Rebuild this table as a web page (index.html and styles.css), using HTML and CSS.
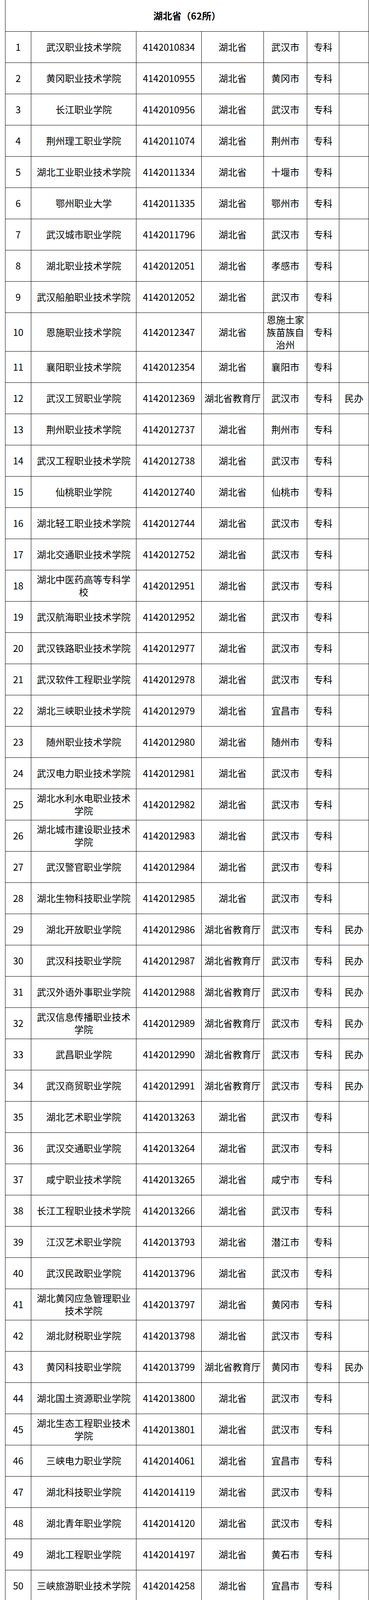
FILE: index.html
```html
<!DOCTYPE html>
<html lang="zh-CN">
<head>
<meta charset="utf-8">
<title>湖北省（62所）</title>
<link rel="stylesheet" href="styles.css">
</head>
<body>
<table class="list">
<colgroup>
<col class="c-no"><col class="c-name"><col class="c-code"><col class="c-dept"><col class="c-city"><col class="c-level"><col class="c-note">
</colgroup>
<thead>
<tr class="title-row"><th colspan="7" class="title">湖北省（62所）</th></tr>
</thead>
<tbody>
<tr><td>1</td><td>武汉职业技术学院</td><td>4142010834</td><td>湖北省</td><td>武汉市</td><td>专科</td><td></td></tr>
<tr><td>2</td><td>黄冈职业技术学院</td><td>4142010955</td><td>湖北省</td><td>黄冈市</td><td>专科</td><td></td></tr>
<tr><td>3</td><td>长江职业学院</td><td>4142010956</td><td>湖北省</td><td>武汉市</td><td>专科</td><td></td></tr>
<tr><td>4</td><td>荆州理工职业学院</td><td>4142011074</td><td>湖北省</td><td>荆州市</td><td>专科</td><td></td></tr>
<tr><td>5</td><td>湖北工业职业技术学院</td><td>4142011334</td><td>湖北省</td><td>十堰市</td><td>专科</td><td></td></tr>
<tr><td>6</td><td>鄂州职业大学</td><td>4142011335</td><td>湖北省</td><td>鄂州市</td><td>专科</td><td></td></tr>
<tr><td>7</td><td>武汉城市职业学院</td><td>4142011796</td><td>湖北省</td><td>武汉市</td><td>专科</td><td></td></tr>
<tr><td>8</td><td>湖北职业技术学院</td><td>4142012051</td><td>湖北省</td><td>孝感市</td><td>专科</td><td></td></tr>
<tr><td>9</td><td>武汉船舶职业技术学院</td><td>4142012052</td><td>湖北省</td><td>武汉市</td><td>专科</td><td></td></tr>
<tr><td>10</td><td>恩施职业技术学院</td><td>4142012347</td><td>湖北省</td><td>恩施土家族苗族自治州</td><td>专科</td><td></td></tr>
<tr><td>11</td><td>襄阳职业技术学院</td><td>4142012354</td><td>湖北省</td><td>襄阳市</td><td>专科</td><td></td></tr>
<tr><td>12</td><td>武汉工贸职业学院</td><td>4142012369</td><td>湖北省教育厅</td><td>武汉市</td><td>专科</td><td>民办</td></tr>
<tr><td>13</td><td>荆州职业技术学院</td><td>4142012737</td><td>湖北省</td><td>荆州市</td><td>专科</td><td></td></tr>
<tr><td>14</td><td>武汉工程职业技术学院</td><td>4142012738</td><td>湖北省</td><td>武汉市</td><td>专科</td><td></td></tr>
<tr><td>15</td><td>仙桃职业学院</td><td>4142012740</td><td>湖北省</td><td>仙桃市</td><td>专科</td><td></td></tr>
<tr><td>16</td><td>湖北轻工职业技术学院</td><td>4142012744</td><td>湖北省</td><td>武汉市</td><td>专科</td><td></td></tr>
<tr><td>17</td><td>湖北交通职业技术学院</td><td>4142012752</td><td>湖北省</td><td>武汉市</td><td>专科</td><td></td></tr>
<tr><td>18</td><td>湖北中医药高等专科学校</td><td>4142012951</td><td>湖北省</td><td>武汉市</td><td>专科</td><td></td></tr>
<tr><td>19</td><td>武汉航海职业技术学院</td><td>4142012952</td><td>湖北省</td><td>武汉市</td><td>专科</td><td></td></tr>
<tr><td>20</td><td>武汉铁路职业技术学院</td><td>4142012977</td><td>湖北省</td><td>武汉市</td><td>专科</td><td></td></tr>
<tr><td>21</td><td>武汉软件工程职业学院</td><td>4142012978</td><td>湖北省</td><td>武汉市</td><td>专科</td><td></td></tr>
<tr><td>22</td><td>湖北三峡职业技术学院</td><td>4142012979</td><td>湖北省</td><td>宜昌市</td><td>专科</td><td></td></tr>
<tr><td>23</td><td>随州职业技术学院</td><td>4142012980</td><td>湖北省</td><td>随州市</td><td>专科</td><td></td></tr>
<tr><td>24</td><td>武汉电力职业技术学院</td><td>4142012981</td><td>湖北省</td><td>武汉市</td><td>专科</td><td></td></tr>
<tr><td>25</td><td>湖北水利水电职业技术学院</td><td>4142012982</td><td>湖北省</td><td>武汉市</td><td>专科</td><td></td></tr>
<tr><td>26</td><td>湖北城市建设职业技术学院</td><td>4142012983</td><td>湖北省</td><td>武汉市</td><td>专科</td><td></td></tr>
<tr><td>27</td><td>武汉警官职业学院</td><td>4142012984</td><td>湖北省</td><td>武汉市</td><td>专科</td><td></td></tr>
<tr><td>28</td><td>湖北生物科技职业学院</td><td>4142012985</td><td>湖北省</td><td>武汉市</td><td>专科</td><td></td></tr>
<tr><td>29</td><td>湖北开放职业学院</td><td>4142012986</td><td>湖北省教育厅</td><td>武汉市</td><td>专科</td><td>民办</td></tr>
<tr><td>30</td><td>武汉科技职业学院</td><td>4142012987</td><td>湖北省教育厅</td><td>武汉市</td><td>专科</td><td>民办</td></tr>
<tr><td>31</td><td>武汉外语外事职业学院</td><td>4142012988</td><td>湖北省教育厅</td><td>武汉市</td><td>专科</td><td>民办</td></tr>
<tr><td>32</td><td>武汉信息传播职业技术学院</td><td>4142012989</td><td>湖北省教育厅</td><td>武汉市</td><td>专科</td><td>民办</td></tr>
<tr><td>33</td><td>武昌职业学院</td><td>4142012990</td><td>湖北省教育厅</td><td>武汉市</td><td>专科</td><td>民办</td></tr>
<tr><td>34</td><td>武汉商贸职业学院</td><td>4142012991</td><td>湖北省教育厅</td><td>武汉市</td><td>专科</td><td>民办</td></tr>
<tr><td>35</td><td>湖北艺术职业学院</td><td>4142013263</td><td>湖北省</td><td>武汉市</td><td>专科</td><td></td></tr>
<tr><td>36</td><td>武汉交通职业学院</td><td>4142013264</td><td>湖北省</td><td>武汉市</td><td>专科</td><td></td></tr>
<tr><td>37</td><td>咸宁职业技术学院</td><td>4142013265</td><td>湖北省</td><td>咸宁市</td><td>专科</td><td></td></tr>
<tr><td>38</td><td>长江工程职业技术学院</td><td>4142013266</td><td>湖北省</td><td>武汉市</td><td>专科</td><td></td></tr>
<tr><td>39</td><td>江汉艺术职业学院</td><td>4142013793</td><td>湖北省</td><td>潜江市</td><td>专科</td><td></td></tr>
<tr><td>40</td><td>武汉民政职业学院</td><td>4142013796</td><td>湖北省</td><td>武汉市</td><td>专科</td><td></td></tr>
<tr><td>41</td><td>湖北黄冈应急管理职业技术学院</td><td>4142013797</td><td>湖北省</td><td>黄冈市</td><td>专科</td><td></td></tr>
<tr><td>42</td><td>湖北财税职业学院</td><td>4142013798</td><td>湖北省</td><td>武汉市</td><td>专科</td><td></td></tr>
<tr><td>43</td><td>黄冈科技职业学院</td><td>4142013799</td><td>湖北省教育厅</td><td>黄冈市</td><td>专科</td><td>民办</td></tr>
<tr><td>44</td><td>湖北国土资源职业学院</td><td>4142013800</td><td>湖北省</td><td>武汉市</td><td>专科</td><td></td></tr>
<tr><td>45</td><td>湖北生态工程职业技术学院</td><td>4142013801</td><td>湖北省</td><td>武汉市</td><td>专科</td><td></td></tr>
<tr><td>46</td><td>三峡电力职业学院</td><td>4142014061</td><td>湖北省</td><td>宜昌市</td><td>专科</td><td></td></tr>
<tr><td>47</td><td>湖北科技职业学院</td><td>4142014119</td><td>湖北省</td><td>武汉市</td><td>专科</td><td></td></tr>
<tr><td>48</td><td>湖北青年职业学院</td><td>4142014120</td><td>湖北省</td><td>武汉市</td><td>专科</td><td></td></tr>
<tr><td>49</td><td>湖北工程职业学院</td><td>4142014197</td><td>湖北省</td><td>黄石市</td><td>专科</td><td></td></tr>
<tr><td>50</td><td>三峡旅游职业技术学院</td><td>4142014258</td><td>湖北省</td><td>宜昌市</td><td>专科</td><td></td></tr>
</tbody>
</table>
</body>
</html>
```
FILE: styles.css
```css
html, body {
  margin: 0;
  padding: 0;
  background: #fff;
}
body {
  padding-left: 13px;
  font-family: "Noto Sans CJK SC", "Noto Sans", sans-serif;
  color: #000;
}
.list {
  border-collapse: collapse;
  table-layout: fixed;
  width: 931px;
  font-size: 24px;
}
.c-no { width: 66px; }
.c-name { width: 269px; }
.c-code { width: 167px; }
.c-dept { width: 159px; }
.c-city { width: 111px; }
.c-level { width: 82px; }
.c-note { width: 76px; }
.list td, .list th {
  border: 1px solid #000;
  text-align: center;
  vertical-align: middle;
  padding: 1px 6px;
  line-height: 32px;
  word-break: break-all;
}
.list tbody tr {
  height: 80px;
}
.list .title-row {
  height: 80px;
}
.list .title {
  border-top: none;
  font-weight: bold;
  font-size: 24px;
}
```
